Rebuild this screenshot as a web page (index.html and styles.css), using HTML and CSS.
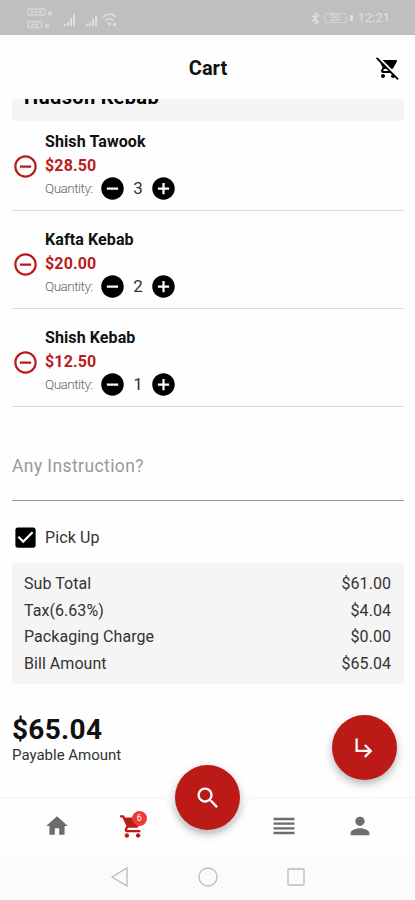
FILE: index.html
```html
<!DOCTYPE html>
<html lang="en">
<head>
<meta charset="utf-8">
<title>Cart</title>
<link rel="stylesheet" href="styles.css">
</head>
<body>
<svg class="defs" width="0" height="0">
  <symbol id="remove-outline" viewBox="0 0 24 24"><path d="M7 11v2h10v-2H7zm5-9C6.480 2 2 6.480 2 12s4.480 10 10 10 10-4.480 10-10S17.520 2 12 2zm0 18c-4.410 0-8-3.590-8-8s3.590-8 8-8 8 3.590 8 8-3.590 8-8 8z"/></symbol>
  <symbol id="minus" viewBox="0 0 24 24"><path d="M12 2C6.480 2 2 6.480 2 12s4.480 10 10 10 10-4.480 10-10S17.520 2 12 2zm5 11H7v-2h10v2z"/></symbol>
  <symbol id="plus" viewBox="0 0 24 24"><path d="M12 2C6.480 2 2 6.480 2 12s4.480 10 10 10 10-4.480 10-10S17.520 2 12 2zm5 11h-4v4h-2v-4H7v-2h4V7h2v4h4v2z"/></symbol>
</svg>
<div class="status">
  <svg class="signals" width="95" height="24" viewBox="0 0 95 24" fill="#dedede">
    <g fill="none" stroke="#d6d6d6" stroke-width="1.500"><rect x="1" y="2" width="17" height="6" rx="1"/><rect x="1" y="14.500" width="14" height="6" rx="1"/><path d="M4 5h11M4 17.500h8" stroke-width="2.500" stroke-dasharray="3 1"/><circle cx="23" cy="6.500" r="1.500"/><circle cx="20" cy="19" r="1.500"/></g>
    <path d="M37 17h2v2h-2zM40 15h2v4h-2zM43 11h2v8h-2zM46 7h2v12h-2zM59 17h2v2h-2zM62 15h2v4h-2zM65 12h2v7h-2zM68 9h2v10h-2z"/>
    <g fill="none" stroke="#dedede" stroke-width="1.600"><path d="M76 10q7-6 13 0M78.500 13.500q4-3.500 8 0"/></g><circle cx="82.500" cy="17" r="1.500"/><path d="M86 16h3v3h-3z"/>
  </svg>
  <div class="status-right">
    <svg width="9" height="13" viewBox="0 0 9 13" fill="none" stroke="#e0e0e0" stroke-width="1.300"><path d="M1 3.500l6.500 6L4.500 12V1l3 2.500-6.500 6"/></svg>
    <span class="battery">20</span><span class="bolt"></span><span class="clock">12:21</span>
  </div>
</div>
<header class="header">
  <h1>Cart</h1>
  <svg class="clear" width="24" height="24" viewBox="0 0 24 24"><path d="M22.730 22.730L2.770 2.770 2 2l-.730-.730L0 2.540l4.390 4.390 2.210 4.660-1.350 2.450c-.160.280-.250.610-.250.960 0 1.100.900 2 2 2h7.460l1.380 1.380c-.500.360-.830.950-.830 1.620 0 1.100.890 2 1.990 2 .670 0 1.260-.330 1.620-.840L21.460 24l1.270-1.270zM7.420 15c-.140 0-.250-.110-.250-.250l.030-.120.900-1.630h2.360l2 2H7.420zm8.130-2c.750 0 1.410-.410 1.750-1.030l3.580-6.490c.080-.140.120-.310.120-.480 0-.550-.450-1-1-1H6.540l9.010 9zM7 18c-1.100 0-1.990.900-1.990 2S5.900 22 7 22s2-.900 2-2-.900-2-2-2z"/></svg>
</header>
<main>
  <section class="restaurant"><h2>Hudson Kebab</h2></section>
  <article class="item">
    <svg class="remove"><use href="#remove-outline"/></svg>
    <div class="info"><h3>Shish Tawook</h3><p class="price">$28.50</p>
      <div class="qty"><span class="label">Quantity:</span><svg><use href="#minus"/></svg><span class="count">3</span><svg><use href="#plus"/></svg></div></div>
  </article>
  <article class="item">
    <svg class="remove"><use href="#remove-outline"/></svg>
    <div class="info"><h3>Kafta Kebab</h3><p class="price">$20.00</p>
      <div class="qty"><span class="label">Quantity:</span><svg><use href="#minus"/></svg><span class="count">2</span><svg><use href="#plus"/></svg></div></div>
  </article>
  <article class="item">
    <svg class="remove"><use href="#remove-outline"/></svg>
    <div class="info"><h3>Shish Kebab</h3><p class="price">$12.50</p>
      <div class="qty"><span class="label">Quantity:</span><svg><use href="#minus"/></svg><span class="count">1</span><svg><use href="#plus"/></svg></div></div>
  </article>
  <div class="instruction">Any Instruction?</div>
  <div class="pickup">
    <svg width="27" height="27" viewBox="0 0 24 24"><path d="M19 3H5c-1.110 0-2 .900-2 2v14c0 1.100.890 2 2 2h14c1.110 0 2-.900 2-2V5c0-1.100-.890-2-2-2zm-9 14l-5-5 1.410-1.410L10 14.170l7.590-7.590L19 8l-9 9z"/></svg>
    <span>Pick Up</span>
  </div>
  <dl class="bill">
    <div><dt>Sub Total</dt><dd>$61.00</dd></div>
    <div><dt>Tax(6.63%)</dt><dd>$4.04</dd></div>
    <div><dt>Packaging Charge</dt><dd>$0.00</dd></div>
    <div><dt>Bill Amount</dt><dd>$65.04</dd></div>
  </dl>
  <div class="checkout">
    <div class="payable"><strong>$65.04</strong><span>Payable Amount</span></div>
    <div class="fab"><svg width="27" height="27" viewBox="0 0 24 24"><path d="M19 15l-6 6-1.420-1.420L15.170 16H4V4h2v10h9.170l-3.590-3.580L13 9l6 6z"/></svg></div>
  </div>
</main>
<nav class="nav">
  <svg class="edge" width="415" height="58" viewBox="0 0 415 58" fill="none" stroke="#f5f5f5" stroke-width="1.500"><path d="M0 .5H158Q169 1 173 11A37 37 0 0 0 243 11Q247 1 258 .5H415"/></svg>
  <div class="tab"><svg class="gray" width="26" height="26" viewBox="0 0 24 24"><path d="M10 20v-6h4v6h5v-8h3L12 3 2 12h3v8z"/></svg></div>
  <div class="tab cart"><svg class="red" width="27" height="27" viewBox="0 0 24 24"><path d="M7 18c-1.100 0-1.990.900-1.990 2S5.900 22 7 22s2-.900 2-2-.900-2-2-2zM1 2v2h2l3.600 7.590-1.350 2.450c-.160.280-.250.610-.250.960 0 1.100.900 2 2 2h12v-2H7.420c-.140 0-.250-.110-.250-.250l.030-.120.900-1.630h7.450c.750 0 1.410-.410 1.750-1.030l3.580-6.490c.080-.140.120-.310.120-.480 0-.550-.450-1-1-1H5.210l-.940-2H1zm16 16c-1.100 0-1.990.900-1.990 2s.890 2 1.990 2 2-.900 2-2-.900-2-2-2z"/></svg><span class="badge">6</span></div>
  <div class="tab"></div>
  <div class="tab"><svg class="gray" width="28" height="28" viewBox="0 0 24 24"><path d="M3 15h18v-2H3v2zm0 4h18v-2H3v2zm0-8h18V9H3v2zm0-6v2h18V5H3z"/></svg></div>
  <div class="tab"><svg class="gray" width="28" height="28" viewBox="0 0 24 24"><path d="M12 12c2.210 0 4-1.790 4-4s-1.790-4-4-4-4 1.790-4 4 1.790 4 4 4zm0 2c-2.670 0-8 1.340-8 4v2h16v-2c0-2.660-5.330-4-8-4z"/></svg></div>
  <div class="fab search"><svg width="28" height="28" viewBox="0 0 24 24"><path d="M15.500 14h-.790l-.280-.270C15.410 12.590 16 11.110 16 9.500 16 5.910 13.090 3 9.500 3S3 5.910 3 9.500 5.910 16 9.500 16c1.610 0 3.090-.590 4.230-1.570l.270.280v.790l5 4.990L20.490 19l-4.990-5zm-6 0C7.010 14 5 11.990 5 9.500S7.010 5 9.500 5 14 7.010 14 9.500 11.990 14 9.500 14z"/></svg></div>
</nav>
<footer class="system">
  <svg width="20" height="22" viewBox="0 0 20 22"><path d="M17 2v18L2 11z"/></svg>
  <svg width="20" height="22" viewBox="0 0 20 22"><circle cx="10" cy="11" r="9"/></svg>
  <svg width="20" height="22" viewBox="0 0 20 22"><rect x="2" y="3" width="16" height="16" rx="1"/></svg>
</footer>
</body>
</html>
```
FILE: styles.css
```css
* { box-sizing: border-box; margin: 0; padding: 0; }
body { width: 415px; height: 900px; overflow: hidden; background: #fefefe; font-family: Roboto, sans-serif; color: #111; display: flex; flex-direction: column; }
svg { display: block; flex: none; }
.defs { position: absolute; }
.status { height: 35px; flex: none; background: #bfbfbf; display: flex; align-items: center; justify-content: space-between; padding: 0 25px 0 27px; }
.signals { margin-top: 2px; }
.status-right { display: flex; align-items: center; color: #dedede; padding-top: 1px; }
.battery { width: 23px; height: 10px; margin-left: 4px; border: 1px solid #d2d2d2; border-radius: 2px; font-size: 9px; line-height: 8px; text-align: center; }
.bolt { width: 3px; height: 6px; margin: 0 5px 0 3px; background: #dedede; }
.clock { font-size: 13px; line-height: 16px; }
.header { height: 64px; flex: none; display: grid; grid-template-columns: 1fr auto 1fr; align-items: center; padding: 2px 15px 0 16px; }
.header h1 { grid-column: 2; font-size: 20px; line-height: 24px; font-weight: 700; }
.clear { justify-self: end; }
main { height: 698px; flex: none; padding: 0 11px 0 12px; }
.restaurant { height: 22px; overflow: hidden; background: #f5f5f5; padding-left: 12px; }
.restaurant h2 { font-size: 20px; line-height: 24px; margin-top: -14px; letter-spacing: .35px; color: #000; }
.item { height: 90px; border-bottom: 1px solid #dcdcdc; display: flex; padding-top: 8px; }
.item + .item { height: 98px; padding-top: 16px; }
.remove { width: 27px; height: 27px; margin: 24px 6px 0 0; fill: #b71c1c; }
.info h3 { font-size: 16px; line-height: 24px; font-weight: 700; letter-spacing: .1px; }
.info { padding-top: 1px; }
.price { font-size: 16px; line-height: 24px; font-weight: 700; letter-spacing: .15px; color: #b71c1c; }
.qty { height: 20px; display: flex; align-items: center; }
.label { width: 54px; font-size: 13.500px; font-weight: 300; letter-spacing: -.5px; color: #666; }
.qty svg { width: 27px; height: 27px; }
.count { width: 24px; text-align: center; font-size: 17px; color: #333; }
.instruction { height: 94px; border-bottom: 1px solid #999; padding-top: 47px; font-size: 17.500px; line-height: 24px; letter-spacing: .4px; color: #999; }
.pickup { height: 62px; display: flex; align-items: center; padding-top: 11px; gap: 6px; font-size: 16px; letter-spacing: .1px; color: #333; }
.bill { height: 121px; background: #f5f5f5; padding: 8px 13px 5px 12px; }
.bill div { display: flex; justify-content: space-between; font-size: 16px; line-height: 26.600px; letter-spacing: .05px; color: #333; }
.checkout { height: 113px; display: flex; justify-content: space-between; padding: 31px 7px 0 0; }
.payable { margin-top: -1px; }
.payable strong { display: block; font-size: 28px; line-height: 32px; font-weight: 700; letter-spacing: .3px; }
.payable span { display: block; margin-top: 1px; font-size: 15px; line-height: 17px; color: #333; }
.fab { width: 65px; height: 65px; border-radius: 50%; background: #bc1a17; display: flex; align-items: center; justify-content: center; box-shadow: 0 4px 8px rgba(40, 50, 50, .35); }
.fab svg { fill: #fff; }
.nav { height: 58px; flex: none; position: relative; display: grid; grid-template-columns: repeat(5, 1fr); padding: 0 17px 0 19px; }
.edge { position: absolute; left: 0; top: 0; }
.tab { display: flex; align-items: center; justify-content: center; }
.gray { fill: #6d6d6d; }
.red { fill: #bc1a17; }
.cart { position: relative; }
.badge { position: absolute; left: 37px; top: 14px; width: 15px; height: 15px; border-radius: 50%; background: #ee3b31; color: #fff; font-size: 9px; line-height: 15px; text-align: center; }
.search { position: absolute; left: 175px; top: -32px; }
.system { height: 45px; flex: none; background: #fbfbfb; display: flex; justify-content: center; gap: 68px; padding-top: 11px; }
.system svg { fill: none; stroke: #bbb; stroke-width: 1.300; }
```
